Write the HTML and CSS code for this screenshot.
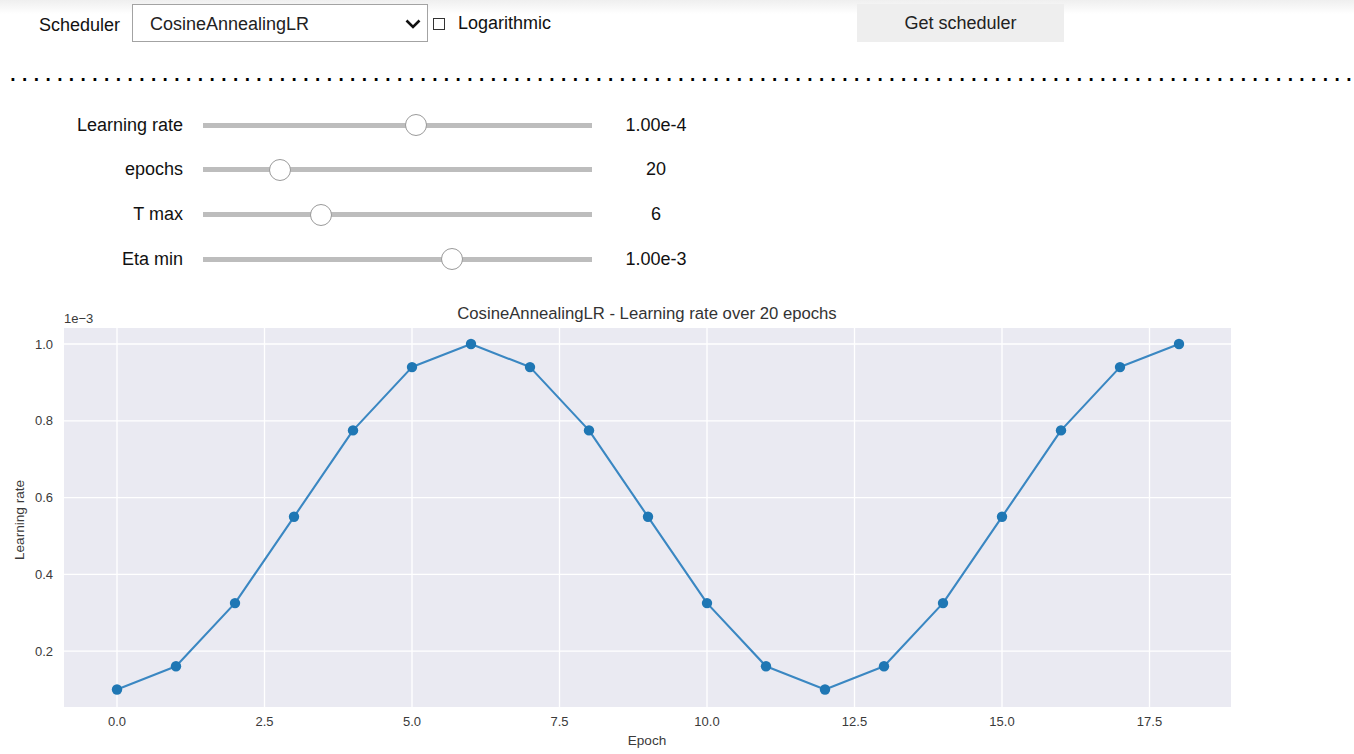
FILE: index.html
```html
<!DOCTYPE html>
<html lang="en">
<head>
<meta charset="utf-8">
<title>Scheduler</title>
<link rel="stylesheet" href="styles.css">
</head>
<body>
<div class="page">
  <header class="toolbar">
    <span class="field-label">Scheduler</span>
    <div class="select">
      <span class="select-value">CosineAnnealingLR</span>
      <svg class="chevron" width="16" height="10" viewBox="0 0 16 10"><polyline points="1.5,1.5 8,8 14.5,1.5" fill="none" stroke="#111" stroke-width="2.6"/></svg>
    </div>
    <div class="check-group">
      <span class="checkbox"></span>
      <span class="check-label">Logarithmic</span>
    </div>
    <button class="btn">Get scheduler</button>
  </header>

  <div class="dots">..................................................................................................................<span class="last-dot">.</span></div>

  <section class="sliders">
    <div class="slider-row">
      <span class="slider-label">Learning rate</span>
      <div class="slider"><div class="track"></div><div class="thumb" style="left: 54.8%"></div></div>
      <span class="slider-value">1.00e-4</span>
    </div>
    <div class="slider-row">
      <span class="slider-label">epochs</span>
      <div class="slider"><div class="track"></div><div class="thumb" style="left: 19.8%"></div></div>
      <span class="slider-value">20</span>
    </div>
    <div class="slider-row">
      <span class="slider-label">T max</span>
      <div class="slider"><div class="track"></div><div class="thumb" style="left: 30.3%"></div></div>
      <span class="slider-value">6</span>
    </div>
    <div class="slider-row">
      <span class="slider-label">Eta min</span>
      <div class="slider"><div class="track"></div><div class="thumb" style="left: 64.0%"></div></div>
      <span class="slider-value">1.00e-3</span>
    </div>
  </section>

  <svg class="chart" width="1354" height="458" viewBox="0 296 1354 458">
    <text class="c-title" x="647" y="319" text-anchor="middle">CosineAnnealingLR - Learning rate over 20 epochs</text>
    <text class="c-tick" x="64" y="323">1e−3</text>
    <rect x="64" y="328" width="1167" height="379" fill="#eaeaf2"/>
    <g stroke="#ffffff" stroke-width="1.3">
      <line x1="117" y1="328" x2="117" y2="707"/>
      <line x1="264.5" y1="328" x2="264.5" y2="707"/>
      <line x1="412" y1="328" x2="412" y2="707"/>
      <line x1="559.5" y1="328" x2="559.5" y2="707"/>
      <line x1="707" y1="328" x2="707" y2="707"/>
      <line x1="854.5" y1="328" x2="854.5" y2="707"/>
      <line x1="1002" y1="328" x2="1002" y2="707"/>
      <line x1="1149.5" y1="328" x2="1149.5" y2="707"/>
      <line x1="64" y1="651.1" x2="1231" y2="651.1"/>
      <line x1="64" y1="574.3" x2="1231" y2="574.3"/>
      <line x1="64" y1="497.6" x2="1231" y2="497.6"/>
      <line x1="64" y1="420.8" x2="1231" y2="420.8"/>
      <line x1="64" y1="344" x2="1231" y2="344"/>
    </g>
    <polyline fill="none" stroke="#3a87c2" stroke-width="2.1" stroke-linejoin="round"
      points="117,689.5 176,666.3 235,603.1 294,516.8 353,430.4 412,367.1 471,344 530,367.1 589,430.4 648,516.8 707,603.1 766,666.3 825,689.5 884,666.3 943,603.1 1002,516.8 1061,430.4 1120,367.1 1179,344"/>
    <g fill="#1f77b4">
      <circle cx="117" cy="689.5" r="5.2"/>
      <circle cx="176" cy="666.3" r="5.2"/>
      <circle cx="235" cy="603.1" r="5.2"/>
      <circle cx="294" cy="516.8" r="5.2"/>
      <circle cx="353" cy="430.4" r="5.2"/>
      <circle cx="412" cy="367.1" r="5.2"/>
      <circle cx="471" cy="344" r="5.2"/>
      <circle cx="530" cy="367.1" r="5.2"/>
      <circle cx="589" cy="430.4" r="5.2"/>
      <circle cx="648" cy="516.8" r="5.2"/>
      <circle cx="707" cy="603.1" r="5.2"/>
      <circle cx="766" cy="666.3" r="5.2"/>
      <circle cx="825" cy="689.5" r="5.2"/>
      <circle cx="884" cy="666.3" r="5.2"/>
      <circle cx="943" cy="603.1" r="5.2"/>
      <circle cx="1002" cy="516.8" r="5.2"/>
      <circle cx="1061" cy="430.4" r="5.2"/>
      <circle cx="1120" cy="367.1" r="5.2"/>
      <circle cx="1179" cy="344" r="5.2"/>
    </g>
    <g class="c-tick" text-anchor="end">
      <text x="53" y="655.6">0.2</text>
      <text x="53" y="578.8">0.4</text>
      <text x="53" y="502.1">0.6</text>
      <text x="53" y="425.3">0.8</text>
      <text x="53" y="348.5">1.0</text>
    </g>
    <g class="c-tick" text-anchor="middle">
      <text x="117" y="726">0.0</text>
      <text x="264.5" y="726">2.5</text>
      <text x="412" y="726">5.0</text>
      <text x="559.5" y="726">7.5</text>
      <text x="707" y="726">10.0</text>
      <text x="854.5" y="726">12.5</text>
      <text x="1002" y="726">15.0</text>
      <text x="1149.5" y="726">17.5</text>
    </g>
    <text class="c-label" x="647" y="745" text-anchor="middle">Epoch</text>
    <text class="c-label" x="24" y="520" text-anchor="middle" transform="rotate(-90 24 520)">Learning rate</text>
  </svg>
</div>
</body>
</html>
```

FILE: styles.css
```css
html, body {
  margin: 0;
  padding: 0;
  background: #ffffff;
  overflow: hidden;
}

.page {
  width: 1354px;
  height: 754px;
  font-family: "Liberation Sans", Arial, sans-serif;
  font-size: 18px;
  color: #111;
  background: linear-gradient(#efefef 0px, #ffffff 14px);
}

.toolbar {
  display: flex;
  align-items: center;
  padding: 4px 0 0 39px;
  height: 38px;
}

.field-label {
  width: 93px;
  flex: none;
  margin-top: 4px;
}

.select {
  flex: none;
  box-sizing: border-box;
  width: 296px;
  height: 38px;
  border: 1px solid #a3a3a3;
  background: #fff;
  display: flex;
  align-items: center;
  justify-content: space-between;
  padding: 2px 6px 0 17px;
  color: #222;
}

.chevron {
  display: block;
}

.check-group {
  flex: none;
  width: 424px;
  margin-left: 5px;
  display: flex;
  align-items: center;
}

.checkbox {
  box-sizing: border-box;
  width: 12px;
  height: 12px;
  border: 1px solid #333;
  background: #fff;
  margin-top: 1px;
}

.check-label {
  margin-left: 13px;
}

.btn {
  flex: none;
  width: 207px;
  height: 38px;
  border: none;
  background: #eeeeee;
  font-family: "Liberation Sans", Arial, sans-serif;
  font-size: 18px;
  color: #222;
  padding: 0;
}

.dots {
  margin-top: 18px;
  height: 24px;
  font-size: 28px;
  line-height: 24px;
  letter-spacing: 3.94px;
  white-space: nowrap;
  padding-left: 9px;
  color: #000;
}

.last-dot {
  letter-spacing: 0;
}

.sliders {
  margin-top: 19px;
}

.slider-row {
  display: flex;
  align-items: center;
  height: 44.67px;
}

.slider-label {
  width: 183px;
  text-align: right;
  flex: none;
}

.slider {
  position: relative;
  width: 389px;
  height: 24px;
  margin-left: 20px;
  flex: none;
  display: flex;
  align-items: center;
}

.track {
  width: 100%;
  height: 5px;
  background: #bdbdbd;
}

.thumb {
  position: absolute;
  top: 1px;
  width: 22px;
  height: 22px;
  margin-left: -11px;
  box-sizing: border-box;
  border-radius: 50%;
  border: 1px solid #9a9a9a;
  background: #fff;
}

.slider-value {
  width: 128px;
  text-align: center;
  flex: none;
}

.chart {
  display: block;
  margin-top: 14.6px;
}

.c-title {
  font-family: "Liberation Sans", Arial, sans-serif;
  font-size: 16.7px;
  fill: #333;
}

.c-tick {
  font-family: "Liberation Sans", Arial, sans-serif;
  font-size: 13px;
  fill: #3a3a3a;
}

.c-label {
  font-family: "Liberation Sans", Arial, sans-serif;
  font-size: 13.6px;
  fill: #3a3a3a;
}
```
